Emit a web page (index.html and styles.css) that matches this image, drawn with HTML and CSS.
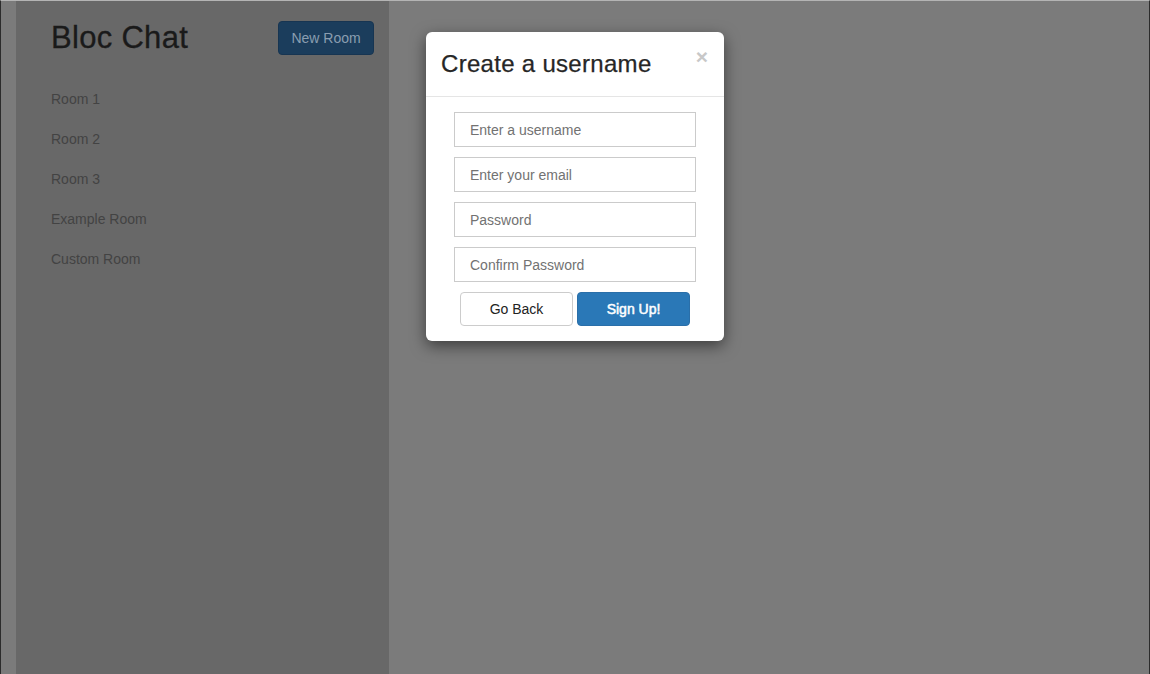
FILE: index.html
```html
<!DOCTYPE html>
<html>
<head>
<meta charset="utf-8">
<title>Bloc Chat</title>
<link rel="stylesheet" href="styles.css">
</head>
<body>
<div class="app">
  <aside class="sidebar">
    <div class="sidebar-header">
      <h1 class="brand">Bloc Chat</h1>
      <button class="btn btn-new">New Room</button>
    </div>
    <ul class="rooms">
      <li>Room 1</li>
      <li>Room 2</li>
      <li>Room 3</li>
      <li>Example Room</li>
      <li>Custom Room</li>
    </ul>
  </aside>
  <main class="main"></main>
</div>

<div class="modal">
  <div class="modal-header">
    <h4 class="modal-title">Create a username</h4>
    <span class="close">&times;</span>
  </div>
  <div class="modal-body">
    <input class="field" type="text" placeholder="Enter a username">
    <input class="field" type="email" placeholder="Enter your email">
    <input class="field" type="password" placeholder="Password">
    <input class="field" type="password" placeholder="Confirm Password">
    <div class="actions">
      <button class="btn btn-default">Go Back</button>
      <button class="btn btn-primary">Sign Up!</button>
    </div>
  </div>
</div>
</body>
</html>
```

FILE: styles.css
```css
* { box-sizing: border-box; }

html, body {
  margin: 0;
  height: 100%;
}

body {
  background: #7b7b7b;
  font-family: "Liberation Sans", Arial, sans-serif;
  font-size: 14px;
  overflow: hidden;
}

.app {
  display: flex;
  height: 674px;
  border-top: 1px solid #b4b4b4;
  border-left: 1px solid #2c2c2c;
  border-right: 1px solid #2c2c2c;
}

.sidebar {
  margin-left: 15px;
  width: 373px;
  background: #686868;
  padding: 20px 15px 0 35px;
}

.sidebar-header {
  display: flex;
  justify-content: space-between;
  align-items: flex-start;
}

.brand {
  margin: 0;
  font-size: 31px;
  font-weight: normal;
  color: #1a1a1a;
  line-height: 34px;
  letter-spacing: 0.3px;
  -webkit-text-stroke: 0.3px #1a1a1a;
}

.btn {
  font-family: "Liberation Sans", Arial, sans-serif;
  font-size: 14px;
  border-radius: 4px;
  cursor: pointer;
  line-height: 20px;
}

.btn-new {
  height: 34px;
  width: 96px;
  background: #1b3d5c;
  border: 1px solid #173552;
  color: #8a9db0;
  padding: 0;
}

.rooms {
  list-style: none;
  margin: 24px 0 0;
  padding: 0;
}

.rooms li {
  height: 40px;
  line-height: 40px;
  color: #434343;
  font-size: 14px;
}

.main {
  flex: 1;
}

.modal {
  position: absolute;
  left: 426px;
  top: 32px;
  width: 298px;
  background: #fff;
  border-radius: 6px;
  box-shadow: 0 5px 15px rgba(0, 0, 0, 0.5);
}

.modal-header {
  display: flex;
  justify-content: space-between;
  align-items: flex-start;
  padding: 15px;
  border-bottom: 1px solid #e5e5e5;
}

.modal-title {
  margin: 0;
  font-size: 24px;
  font-weight: normal;
  line-height: 34px;
  color: #262626;
  letter-spacing: 0.3px;
  -webkit-text-stroke: 0.25px #262626;
}

.close {
  font-size: 21px;
  font-weight: bold;
  color: #c8c8c8;
  line-height: 1;
  margin-top: -1px;
  margin-right: 1px;
}

.modal-body {
  padding: 15px;
  display: flex;
  flex-direction: column;
  align-items: center;
  gap: 10px;
}

.field {
  width: 242px;
  height: 35px;
  border: 1px solid #cbcbcb;
  border-radius: 0;
  padding: 0 15px;
  font-family: "Liberation Sans", Arial, sans-serif;
  font-size: 14px;
  color: #555;
  outline: none;
}

.field::placeholder {
  color: #727272;
  opacity: 1;
}

.actions {
  display: flex;
  gap: 4px;
}

.actions .btn {
  width: 113px;
  height: 34px;
  padding: 0;
}

.btn-default {
  background: #fff;
  border: 1px solid #ccc;
  color: #222;
}

.btn-primary {
  background: #2a78b7;
  border: 1px solid #2a6fa9;
  color: #fff;
  font-weight: normal;
  -webkit-text-stroke: 0.5px #fff;
}
```
